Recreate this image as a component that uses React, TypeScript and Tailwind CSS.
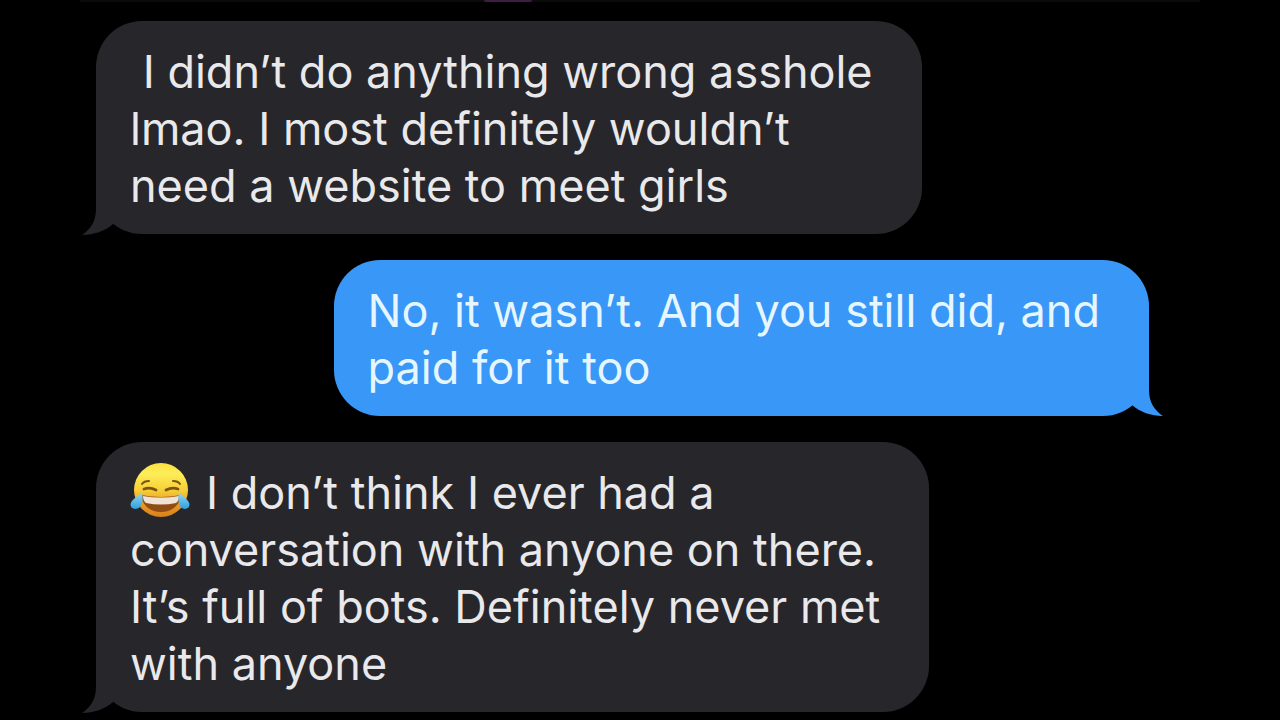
import type { ReactNode } from "react";

type Side = "received" | "sent";

function Tail({ side }: { side: Side }) {
  return (
    <svg
      aria-hidden="true"
      viewBox="0 0 44 60"
      className={
        side === "received"
          ? "absolute -bottom-px -left-3.5 h-15 w-11 fill-[#27262b]"
          : "absolute bottom-0 -right-3.5 h-15 w-11 -scale-x-100 fill-[#3897f7]"
      }
    >
      <path d="M14 0V34C14 46 9 54 0 60C12 60 23 56 31 49L44 30V0Z" />
    </svg>
  );
}

function JoyFace() {
  return (
    <svg
      role="img"
      aria-label="Face with tears of joy"
      viewBox="0 0 60 56"
      className="mr-4 inline-block h-14 w-15 -mt-3.5 align-middle"
    >
      <defs>
        <linearGradient id="joy-skin" x1="0" y1="0" x2="0" y2="1">
          <stop offset="0" stopColor="#fbe040" />
          <stop offset="0.2" stopColor="#fdee58" />
          <stop offset="0.5" stopColor="#f8cf38" />
          <stop offset="0.75" stopColor="#e99a28" />
          <stop offset="1" stopColor="#d9801c" />
        </linearGradient>
        <linearGradient id="joy-tear" x1="0" y1="0" x2="0" y2="1">
          <stop offset="0" stopColor="#8fd8f2" />
          <stop offset="1" stopColor="#2f9fe0" />
        </linearGradient>
      </defs>
      <circle cx="31" cy="28" r="27" fill="url(#joy-skin)" />
      <g fill="none" stroke="#7b5412" strokeLinecap="round">
        <path d="M12 22Q14 19 19 19" strokeWidth="2" />
        <path d="M43 19Q48 19 50 22" strokeWidth="2" />
        <path d="M14 27Q20 25 26 28" strokeWidth="2.8" />
        <path d="M36 28Q42 25 48 27" strokeWidth="2.8" />
      </g>
      <path d="M11 33Q31 37 51 33C50 43 42 50 31 50S12 43 11 33Z" fill="#8f4d14" />
      <path d="M13 34Q31 37 49 34Q49 39 46 41Q31 44 16 41Q13 39 13 34Z" fill="#f0e2d4" />
      <path d="M12 31C14 41 11 47 5 47C1 47 -1 43 2 39C4 36 8 34 12 31Z" fill="url(#joy-tear)" />
      <path d="M49 31C47 41 50 47 55 47C59 47 61 43 58 39C56 36 53 34 49 31Z" fill="url(#joy-tear)" />
    </svg>
  );
}

function Bubble({ side, lines }: { side: Side; lines: ReactNode[] }) {
  return (
    <li
      className={
        side === "received"
          ? "relative self-start rounded-[46px] bg-[#27262b] pt-[22px] pr-[49px] pb-5 pl-[34px] text-[#e9e9eb]"
          : "relative self-end rounded-[46px] bg-[#3897f7] pt-[22px] pr-[49px] pb-5 pl-[34px] text-[#e6f6ff]"
      }
    >
      <Tail side={side} />
      <p className="relative">
        {lines.map((line, i) => (
          <span key={i} className="block h-[57px] whitespace-pre">
            {line}
          </span>
        ))}
      </p>
    </li>
  );
}

export default function App() {
  return (
    <main className="h-screen overflow-hidden bg-black font-['Inter','Liberation_Sans',sans-serif] text-[45px] leading-[57px]">
      <div className="mx-20 flex h-[21px] items-start border-t-2 border-[#0b0b0c]">
        <span className="-mt-0.5 ml-[404px] h-0.5 w-12 rounded-b-full bg-[#3d1d40]" />
      </div>
      <ul className="flex flex-col gap-[26px] pr-[131px] pl-24">
        <Bubble
          side="received"
          lines={[
            " I didn’t do anything wrong asshole",
            "lmao. I most definitely wouldn’t",
            "need a website to meet girls",
          ]}
        />
        <Bubble
          side="sent"
          lines={["No, it wasn’t. And you still did, and", "paid for it too"]}
        />
        <Bubble
          side="received"
          lines={[
            <>
              <JoyFace />I don’t think I ever had a
            </>,
            "conversation with anyone on there.",
            "It’s full of bots. Definitely never met",
            "with anyone",
          ]}
        />
      </ul>
    </main>
  );
}
